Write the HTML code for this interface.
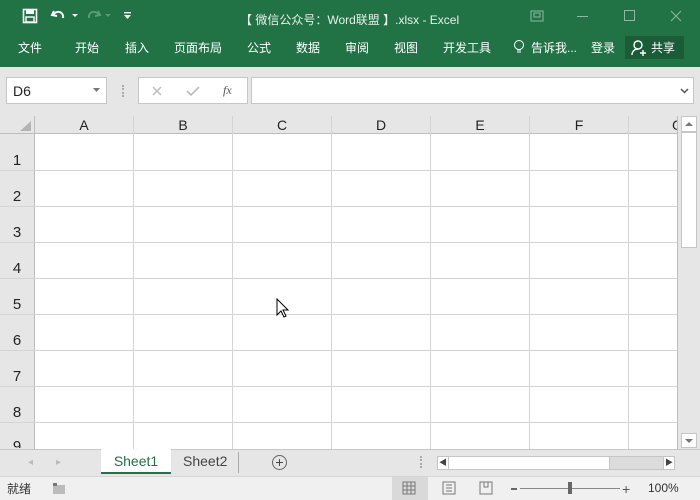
<!DOCTYPE html>
<html><head><meta charset="utf-8"><style>
*{margin:0;padding:0;box-sizing:border-box}
body{width:700px;height:500px;overflow:hidden;background:#e6e6e6;font-family:"Liberation Sans","Noto Sans CJK SC",sans-serif;position:relative}
.a{position:absolute}
.top{left:0;top:0;width:700px;height:67px;background:#217346}
.w{color:#fff;font-size:12px}
.t{top:39px;font-size:12px;color:#fff}
.box{background:#fff;border:1px solid #c6c6c6}
.ch{top:116px;height:18px;font-size:14px;color:#222;text-align:center;line-height:19px}
.rh{left:0;width:34px;font-size:15px;color:#222;text-align:center}
.vl{top:116px;width:1px;height:333px;background:#d4d4d4}
.hl{left:0;width:677px;height:1px;background:#d4d4d4}
</style></head><body>
<div class="a top"></div>
<svg class="a" style="left:22px;top:8px" width="16" height="16"><rect x="1.5" y="1.5" width="13" height="13" fill="none" stroke="#fff" stroke-width="1.6"/><rect x="4" y="2" width="8" height="4" fill="#fff"/><rect x="4" y="9" width="8" height="5" fill="none" stroke="#fff" stroke-width="1.4"/></svg>
<svg class="a" style="left:50px;top:7px" width="30" height="16"><path d="M4 4 L2 8 L7 9 M3 8 C6 3 14 4 13 11" fill="none" stroke="#fff" stroke-width="2"/><path d="M22 7 l3 3 l3-3z" fill="#fff"/></svg>
<svg class="a" style="left:84px;top:7px" width="30" height="16"><path d="M14 4 L16 8 L11 9 M15 8 C12 3 4 4 5 11" fill="none" stroke="#5a9a74" stroke-width="2"/><path d="M21 7 l3 3 l3-3z" fill="#5a9a74"/></svg>
<svg class="a" style="left:123px;top:11px" width="10" height="10"><rect x="1" y="1" width="7" height="1.4" fill="#fff"/><path d="M1 4 l3.5 4 l3.5-4z" fill="#fff"/></svg>
<div class="a w" style="left:240px;top:11px;color:#e8f0ea">【 微信公众号：Word联盟 】.xlsx - Excel</div>
<svg class="a" style="left:530px;top:10px" width="14" height="12"><rect x="1" y="1" width="12" height="10" fill="none" stroke="#8fb8a0"/><rect x="4" y="3" width="6" height="4" fill="none" stroke="#8fb8a0"/></svg>
<div class="a" style="left:577px;top:16px;width:11px;height:1px;background:#8fb8a0"></div>
<div class="a" style="left:624px;top:10px;width:11px;height:11px;border:1px solid #8fb8a0"></div>
<svg class="a" style="left:670px;top:10px" width="12" height="12"><path d="M1 1L11 11M11 1L1 11" stroke="#8fb8a0"/></svg>
<div class="a t" style="left:18px">文件</div>
<div class="a t" style="left:75px">开始</div>
<div class="a t" style="left:125px">插入</div>
<div class="a t" style="left:174px">页面布局</div>
<div class="a t" style="left:247px">公式</div>
<div class="a t" style="left:296px">数据</div>
<div class="a t" style="left:345px">审阅</div>
<div class="a t" style="left:394px">视图</div>
<div class="a t" style="left:443px">开发工具</div>
<svg class="a" style="left:513px;top:39px" width="12" height="16"><circle cx="6" cy="6" r="4.5" fill="none" stroke="#fff"/><path d="M4 11h4M4 13h4" stroke="#fff"/></svg>
<div class="a t" style="left:531px">告诉我...</div>
<div class="a t" style="left:591px">登录</div>
<div class="a" style="left:625px;top:36px;width:59px;height:23px;background:#1a5c38"></div>
<svg class="a" style="left:630px;top:39px" width="18" height="18"><circle cx="8" cy="6" r="4" fill="none" stroke="#fff" stroke-width="1.4"/><path d="M2 16c0-4 3-6 6-6" fill="none" stroke="#fff" stroke-width="1.4"/><path d="M13 11v6M10 14h6" stroke="#fff" stroke-width="1.4"/></svg>
<div class="a t" style="left:651px">共享</div>
<div class="a box" style="left:6px;top:77px;width:101px;height:27px"></div>
<div class="a" style="left:13px;top:83px;font-size:14px;color:#222">D6</div>
<svg class="a" style="left:93px;top:88px" width="8" height="6"><path d="M0 0h7l-3.5 4z" fill="#777"/></svg>
<div class="a" style="left:122px;top:85px;width:2px;height:12px;border-left:2px dotted #aaa"></div>
<div class="a box" style="left:138px;top:77px;width:110px;height:27px"></div>
<svg class="a" style="left:151px;top:85px" width="12" height="12"><path d="M2 2l8 8M10 2l-8 8" stroke="#bbb" stroke-width="1.4"/></svg>
<svg class="a" style="left:186px;top:85px" width="14" height="12"><path d="M1 6l4 4l8-8" fill="none" stroke="#bbb" stroke-width="1.6"/></svg>
<div class="a" style="left:223px;top:83px;font-size:12px;font-style:italic;font-family:'Liberation Serif',serif;color:#555">fx</div>
<div class="a box" style="left:251px;top:77px;width:443px;height:27px"></div>
<svg class="a" style="left:680px;top:88px" width="9" height="6"><path d="M1 1l3.5 3.5L8 1" fill="none" stroke="#555" stroke-width="1.5"/></svg>
<div class="a" style="left:34px;top:134px;width:643px;height:315px;background:#fff"></div>
<div class="a" style="left:0;top:134px;width:34px;height:315px;background:#e6e6e6"></div>
<svg class="a" style="left:18px;top:120px" width="14" height="12"><path d="M13 1v10H2z" fill="#b4b4b4"/></svg>
<div class="a" style="left:0;top:133px;width:677px;height:1px;background:#bdbdbd"></div>
<div class="a" style="left:34px;top:116px;width:1px;height:333px;background:#bdbdbd"></div>
<div class="a vl" style="left:133px"></div><div class="a vl" style="left:232px"></div><div class="a vl" style="left:331px"></div><div class="a vl" style="left:430px"></div><div class="a vl" style="left:529px"></div><div class="a vl" style="left:628px"></div>
<div class="a ch" style="left:35px;width:98px">A</div><div class="a ch" style="left:134px;width:98px">B</div><div class="a ch" style="left:233px;width:98px">C</div><div class="a ch" style="left:332px;width:98px">D</div><div class="a ch" style="left:431px;width:98px">E</div><div class="a ch" style="left:530px;width:98px">F</div><div class="a ch" style="left:672px;width:6px;overflow:hidden;text-align:left">G</div>
<div class="a hl" style="top:170px"></div><div class="a hl" style="top:206px"></div><div class="a hl" style="top:242px"></div><div class="a hl" style="top:278px"></div><div class="a hl" style="top:314px"></div><div class="a hl" style="top:350px"></div><div class="a hl" style="top:386px"></div><div class="a hl" style="top:422px"></div>
<div class="a rh" style="top:152px">1</div><div class="a rh" style="top:188px">2</div><div class="a rh" style="top:224px">3</div><div class="a rh" style="top:260px">4</div><div class="a rh" style="top:296px">5</div><div class="a rh" style="top:332px">6</div><div class="a rh" style="top:368px">7</div><div class="a rh" style="top:404px">8</div><div class="a rh" style="top:438px;height:10px;overflow:hidden">9</div>
<svg class="a" style="left:276px;top:298px" width="14" height="22"><path d="M1 1v16l4-4l3 6l2-1l-3-6h5z" fill="#fff" stroke="#000"/></svg>
<div class="a" style="left:677px;top:116px;width:23px;height:333px;background:#e6e6e6;border-left:1px solid #bdbdbd"></div>
<div class="a box" style="left:681px;top:116px;width:16px;height:16px"></div>
<svg class="a" style="left:685px;top:121px" width="8" height="6"><path d="M0 5h8L4 1z" fill="#777"/></svg>
<div class="a box" style="left:681px;top:132px;width:16px;height:116px"></div>
<div class="a box" style="left:681px;top:433px;width:16px;height:15px"></div>
<svg class="a" style="left:685px;top:438px" width="8" height="6"><path d="M0 1h8L4 5z" fill="#777"/></svg>
<div class="a" style="left:0;top:449px;width:700px;height:27px;background:#e6e6e6;border-top:1px solid #c6c6c6"></div>
<div class="a" style="left:28px;top:457px;font-size:10px;color:#bbb">◂</div>
<div class="a" style="left:56px;top:457px;font-size:10px;color:#bbb">▸</div>
<div class="a" style="left:101px;top:449px;width:70px;height:25px;background:#fff;border-bottom:2px solid #217346;font-size:14px;color:#217346;text-align:center;line-height:24px">Sheet1</div>
<div class="a" style="left:183px;top:453px;font-size:14px;color:#444">Sheet2</div>
<div class="a" style="left:238px;top:452px;width:1px;height:21px;background:#aaa"></div>
<div class="a" style="left:272px;top:455px;width:15px;height:15px;border:1px solid #666;border-radius:50%;font-size:14px;line-height:12px;text-align:center;color:#444">+</div>
<div class="a" style="left:420px;top:456px;width:2px;height:12px;border-left:2px dotted #aaa"></div>
<div class="a box" style="left:437px;top:456px;width:238px;height:14px;background:#dcdcdc"></div>
<div class="a box" style="left:437px;top:456px;width:173px;height:14px"></div>
<div class="a box" style="left:437px;top:456px;width:12px;height:14px;font-size:8px;line-height:12px;text-align:center;color:#444">◀</div>
<div class="a box" style="left:663px;top:456px;width:12px;height:14px;font-size:8px;line-height:12px;text-align:center;color:#444">▶</div>
<div class="a" style="left:0;top:476px;width:700px;height:24px;background:#f0f0f0;border-top:1px solid #d6d6d6"></div>
<div class="a" style="left:7px;top:480px;font-size:12px;color:#333">就绪</div>
<svg class="a" style="left:52px;top:482px" width="14" height="13"><rect x="1" y="3" width="12" height="9" fill="#bbb"/><rect x="1" y="1" width="4" height="3" fill="#777"/></svg>
<div class="a" style="left:392px;top:477px;width:36px;height:23px;background:#d9d9d9"></div>
<svg class="a" style="left:402px;top:481px" width="14" height="14"><path d="M1 1h12v12H1zM5 1v12M9 1v12M1 5h12M1 9h12" fill="none" stroke="#777"/></svg>
<svg class="a" style="left:442px;top:481px" width="14" height="14"><rect x="1" y="1" width="12" height="12" fill="none" stroke="#777"/><path d="M4 4h6M4 7h6M4 10h6" stroke="#777"/></svg>
<svg class="a" style="left:479px;top:481px" width="14" height="14"><path d="M1 1h12v12H1zM5 1v5h4V1" fill="none" stroke="#777"/></svg>
<div class="a" style="left:511px;top:488px;width:6px;height:2px;background:#666"></div>
<div class="a" style="left:520px;top:488px;width:100px;height:1px;background:#888"></div>
<div class="a" style="left:568px;top:482px;width:4px;height:12px;background:#666"></div>
<div class="a" style="left:622px;top:481px;font-size:14px;color:#555">+</div>
<div class="a" style="left:648px;top:481px;font-size:12px;color:#333">100%</div>
</body></html>
